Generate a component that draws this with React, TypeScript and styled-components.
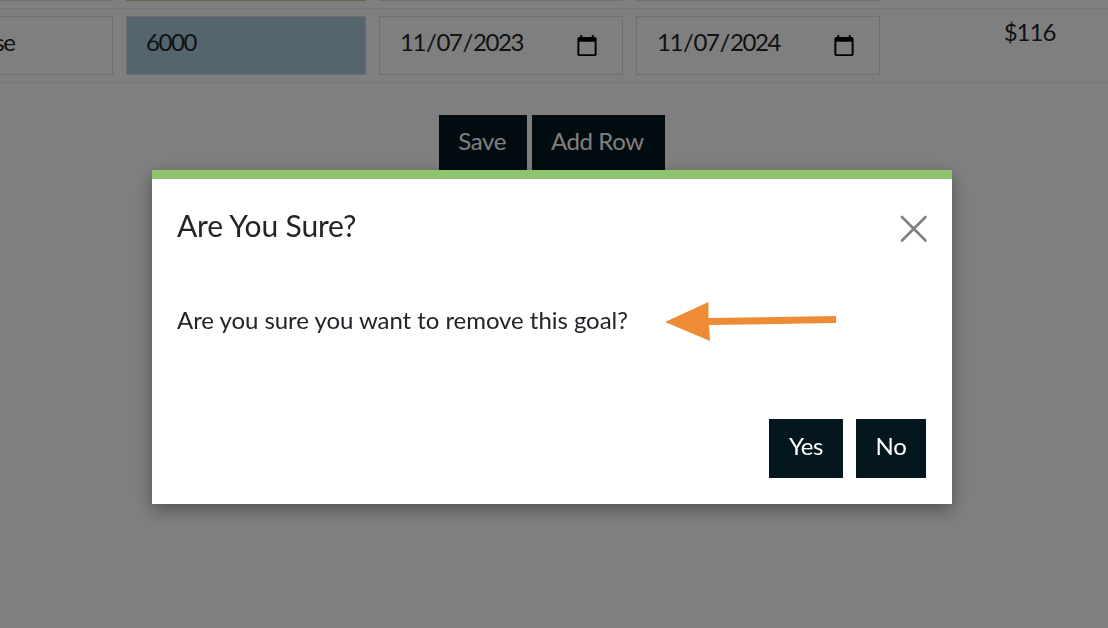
import React from 'react'
import styled, { createGlobalStyle } from 'styled-components'

const GlobalStyle = createGlobalStyle`
  html, body {
    margin: 0;
    height: 100%;
    overflow: hidden;
    background: #fff;
  }
  body {
    font-family: Lato, 'Liberation Sans', sans-serif;
    color: #212529;
  }
  * {
    box-sizing: border-box;
  }
`

const Page = styled.div`
  margin: -65px 0 0 -90px;
  width: 1198px;
`

const GoalRow = styled.div`
  display: grid;
  grid-template-columns: 203px 240px 244px 244px 1fr;
  column-gap: 13px;
  padding: 7px 0;
  border-bottom: 1px solid #ececec;
`

const Field = styled.input<{ $state?: 'filled' | 'valid' }>`
  width: 100%;
  height: 59px;
  padding: 0 23px 9px 19px;
  border: 1px solid ${(p) => (p.$state === 'valid' ? '#b4dc9c' : '#dcdcdc')};
  border-radius: 0;
  background: ${(p) => (p.$state ? '#abcbdd' : '#fff')};
  font-family: inherit;
  font-size: 24px;
  letter-spacing: -1.4px;
  color: #212529;
  outline: none;

  &::-webkit-calendar-picker-indicator {
    margin: 9px 0 0;
    padding: 0;
    opacity: 1;
  }
`

const Total = styled.div`
  padding-left: 58px;
  font-size: 24px;
  line-height: 32px;
  letter-spacing: -1px;
  text-align: center;
`

const Actions = styled.div`
  display: flex;
  justify-content: center;
  gap: 5px;
  margin: 32px 0 0 86px;
`

const DarkButton = styled.button`
  height: 59px;
  padding: 0 21px 9px 19px;
  border: 0;
  border-radius: 0;
  background: #04171f;
  font-family: inherit;
  font-size: 24px;
  letter-spacing: -0.4px;
  color: #fff;
`

const Backdrop = styled.div`
  position: fixed;
  inset: 0;
  background: rgba(0, 0, 0, 0.5);
`

const Dialog = styled.div`
  position: relative;
  width: 800px;
  height: 334px;
  margin: 170px 0 0 152px;
  display: flex;
  flex-direction: column;
  border-top: 9px solid #8fc46e;
  background: #fff;
  box-shadow: 0 6px 16px rgba(0, 0, 0, 0.35);
`

const DialogHeader = styled.div`
  display: flex;
  justify-content: space-between;
  padding: 26px 24px 0 25px;
`

const DialogTitle = styled.h2`
  margin: 0;
  font-size: 30px;
  font-weight: 400;
  line-height: 40px;
  letter-spacing: -0.15px;
`

const CloseButton = styled.button`
  display: flex;
  width: 28px;
  height: 28px;
  margin-top: 10px;
  padding: 0;
  border: 0;
  background: none;
`

const DialogBody = styled.p`
  margin: 58px 25px 0;
  font-size: 24px;
  line-height: 34px;
  letter-spacing: -0.05px;
`

const DialogFooter = styled.div`
  display: grid;
  grid-template-columns: 74px 70px;
  justify-content: end;
  gap: 13px;
  margin-top: auto;
  padding: 0 26px 26px;
`

const DialogButton = styled(DarkButton)`
  padding: 0 0 7px;
`

const Arrow = styled.svg`
  position: absolute;
  left: 512px;
  top: 122px;
`

const CloseIcon = () => (
  <svg width="28" height="28" viewBox="0 0 28 28" fill="none">
    <path
      d="M2 2 L25.5 25.5 M25.5 2 L2 25.5"
      stroke="#808080"
      strokeWidth="2.6"
      strokeLinecap="round"
    />
  </svg>
)

const App = () => (
  <>
    <GlobalStyle />
    <Page>
      <GoalRow>
        <Field readOnly />
        <Field $state="valid" readOnly />
        <Field readOnly />
        <Field readOnly />
        <Total />
      </GoalRow>
      <GoalRow>
        <Field defaultValue="Purchase" />
        <Field $state="filled" defaultValue="6000" />
        <Field type="date" defaultValue="2023-11-07" />
        <Field type="date" defaultValue="2024-11-07" />
        <Total>$116</Total>
      </GoalRow>
      <Actions>
        <DarkButton>Save</DarkButton>
        <DarkButton>Add Row</DarkButton>
      </Actions>
    </Page>
    <Backdrop>
      <Dialog>
        <DialogHeader>
          <DialogTitle>Are You Sure?</DialogTitle>
          <CloseButton aria-label="Close">
            <CloseIcon />
          </CloseButton>
        </DialogHeader>
        <DialogBody>Are you sure you want to remove this goal?</DialogBody>
        <DialogFooter>
          <DialogButton>Yes</DialogButton>
          <DialogButton>No</DialogButton>
        </DialogFooter>
        <Arrow width="173" height="41" viewBox="0 0 173 41" fill="none">
          <polygon
            points="1,21 44.5,1 44.5,17 172,15 172,22 45,24 46,40"
            fill="#ee8b35"
          />
        </Arrow>
      </Dialog>
    </Backdrop>
  </>
)

export default App
